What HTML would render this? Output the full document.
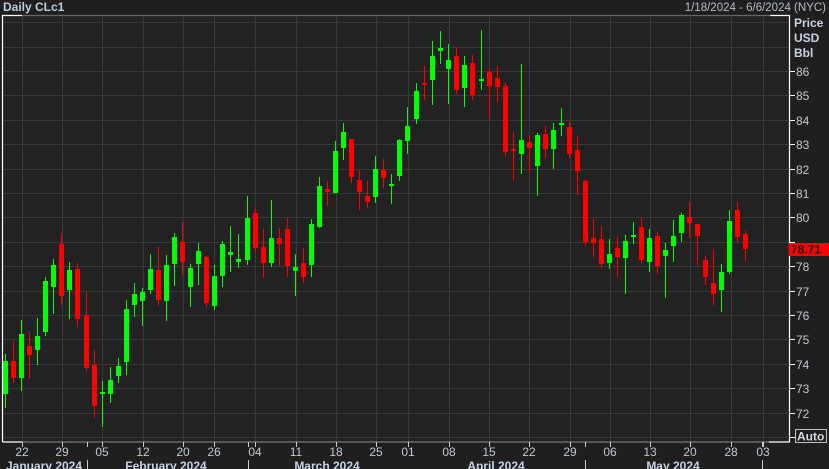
<!DOCTYPE html>
<html><head><meta charset="utf-8"><style>
html,body{margin:0;padding:0;background:#1e1e1f;width:829px;height:469px;overflow:hidden}
svg{display:block}
text{font-family:"Liberation Sans",sans-serif}
</style></head><body>
<svg id="s" width="829" height="469" xmlns="http://www.w3.org/2000/svg">
<rect x="0" y="0" width="829" height="469" fill="#1f1f20"/>
<rect x="2" y="15" width="787" height="427" fill="#222222"/>
<g id="grid" stroke="#3a3a3a" stroke-width="1"></g>
<g id="c"></g>
<g fill="none" stroke-width="1.2">
<path d="M2.5 442V15.5H22" stroke="#fff"/>
<path d="M22 15.5H770" stroke="#666"/>
<path d="M770 15.5H789.5V442H769" stroke="#fff"/>
<path d="M769 442H22" stroke="#777"/>
<path d="M2.5 442H22" stroke="#fff"/>
</g>
<text x="3" y="11" font-size="12" font-weight="bold" fill="#b9cde2">Daily CLc1</text>
<text x="826" y="11" font-size="11.5" fill="#b4bcc6" text-anchor="end">1/18/2024 - 6/6/2024 (NYC)</text>
<g font-size="12" font-weight="bold" fill="#c7d3e3">
<text x="794" y="27">Price</text><text x="794" y="42">USD</text><text x="794" y="57">Bbl</text>
</g>
<g id="ax" font-size="12" fill="#c0c8d2"></g>
<rect x="789" y="243" width="40" height="13" fill="#ff0000"/>
<text x="791" y="253.5" font-size="12" font-weight="bold" fill="#1a1a1a">78.71</text>
<rect x="795.5" y="429.5" width="31" height="13" fill="none" stroke="#c0c0c0"/>
<text x="797" y="440.5" font-size="12" font-weight="bold" fill="#d0d8e0">Auto</text>
<g id="bx" font-size="12" fill="#c0c8d2" text-anchor="middle"></g>
</svg>
<script>
var NS="http://www.w3.org/2000/svg";
function el(p,t,a,txt){var e=document.createElementNS(NS,t);for(var k in a)e.setAttribute(k,a[k]);if(txt)e.textContent=txt;document.getElementById(p).appendChild(e);return e;}
// horizontal grid
for(var p=71;p<=88;p++){var y=Math.round(71+(86-p)*24.4)+0.5;if(y>16&&y<442)el("grid","line",{x1:2,x2:789,y1:y,y2:y});
 if(p>=72&&p<=86&&p!=79){el("ax","line",{x1:789,x2:795,y1:y,y2:y,stroke:"#fff"});el("ax","text",{x:796,y:y+4.5},String(p));}
 if(p==79){el("ax","line",{x1:789,x2:795,y1:y,y2:y,stroke:"#fff"});}
}
el("ax","line",{x1:789,x2:795,y1:437.5,y2:437.5,stroke:"#fff"});
// vertical grid & labels
var vx=[[22,"22"],[62,"29"],[102,"05"],[143,"12"],[183,"20"],[214,"26"],[255,"04"],[296,"11"],[336,"18"],[376,"25"],[408,"01"],[449,"08"],[489,"15"],[529,"22"],[570,"29"],[610,"06"],[650,"13"],[690,"20"],[731,"28"],[763,"03"]];
vx.forEach(function(v){var x=v[0]+0.5;el("grid","line",{x1:x,x2:x,y1:16,y2:442});el("bx","line",{x1:x,x2:x,y1:442,y2:447,stroke:"#ccc"});el("bx","text",{x:v[0],y:456},v[1]);});
[87,248,585,762].forEach(function(x){el("bx","line",{x1:x+.5,x2:x+.5,y1:442,y2:447,stroke:"#ccc"});el("bx","line",{x1:x+.5,x2:x+.5,y1:460,y2:469,stroke:"#ccc"});});
[[44,"January 2024"],[166,"February 2024"],[327,"March 2024"],[496,"April 2024"],[673,"May 2024"]].forEach(function(m){el("bx","text",{x:m[0],y:470,"font-weight":"bold",fill:"#c7d3e3"},m[1]);});
// candles: x, wickTop, wickBot, bodyTop, bodyBot, green?
var C=[[5,354,408,361,394,1],[13,341,383,361,378,0],[21,320,391,334,378,1],[29,333,378,346,355,0],[37,318,365,336,350,1],[45,277,336,281,332,1],[53,259,314,265,287,1],[61,233,305,244,296,0],[69,262,319,270,290,1],[77,263,327,269,319,0],[86,291,371,315,368,0],[94,350,418,365,406,0],[102,381,427,392,394,1],[110,367,403,380,394,1],[118,358,383,366,376,1],[126,300,375,309,362,1],[134,283,317,294,305,1],[142,288,326,292,301,1],[150,254,294,269,290,1],[158,247,306,270,300,0],[166,255,321,265,301,1],[174,233,286,237,264,1],[182,222,275,242,262,0],[190,264,307,268,287,1],[198,243,285,251,264,1],[206,256,307,257,303,0],[214,265,310,276,306,1],[222,241,287,244,276,1],[230,226,272,252,255,1],[238,234,268,259,262,1],[247,196,265,218,260,1],[255,207,253,213,248,0],[263,229,278,247,263,0],[271,200,267,238,263,1],[279,228,266,238,244,0],[287,217,277,229,266,0],[295,254,296,267,271,1],[303,248,283,263,277,0],[311,219,277,224,265,1],[319,177,228,186,227,1],[327,181,206,189,192,0],[335,141,193,151,193,1],[343,123,160,132,148,1],[351,139,183,139,177,0],[359,170,210,180,192,0],[367,181,208,196,202,0],[375,156,203,169,197,1],[383,159,188,170,178,0],[391,174,204,184,186,1],[399,139,181,140,176,1],[407,107,154,126,141,1],[416,83,124,91,119,1],[424,66,100,83,85,0],[432,41,105,56,80,1],[440,31,64,48,51,1],[448,44,104,60,69,1],[456,47,94,56,90,0],[464,56,107,65,88,1],[472,55,100,63,95,0],[481,30,90,79,81,1],[489,68,119,72,86,0],[497,66,102,78,87,0],[505,83,156,86,152,0],[513,132,180,149,151,0],[521,64,174,140,154,1],[529,135,173,142,148,0],[537,133,196,135,166,1],[545,126,158,134,149,0],[553,123,169,130,149,1],[561,108,136,123,125,1],[569,122,158,127,154,0],[577,136,195,150,171,0],[585,179,246,181,242,0],[593,219,257,238,243,0],[601,226,268,239,264,0],[609,239,269,254,263,1],[617,237,277,248,257,0],[625,235,294,241,258,1],[633,222,244,235,237,1],[641,218,263,227,260,0],[649,229,272,238,262,1],[657,232,274,236,266,0],[665,243,298,250,256,1],[673,220,262,236,246,1],[681,213,242,215,233,1],[689,202,238,217,223,0],[697,224,265,224,236,0],[705,256,285,260,277,0],[713,249,305,283,294,0],[721,264,312,272,290,1],[729,210,274,221,272,1],[737,202,242,210,237,0],[745,231,261,234,249,0]];
C.forEach(function(c){var col=c[5]?"#00ff00":"#ff0000";var x=c[0];
 el("c","rect",{x:x,y:c[1],width:1,height:c[2]-c[1],fill:col});
 var h=Math.max(2,c[4]-c[3]);el("c","rect",{x:x-2,y:c[3],width:5,height:h,fill:col});});
</script>
</body></html>
